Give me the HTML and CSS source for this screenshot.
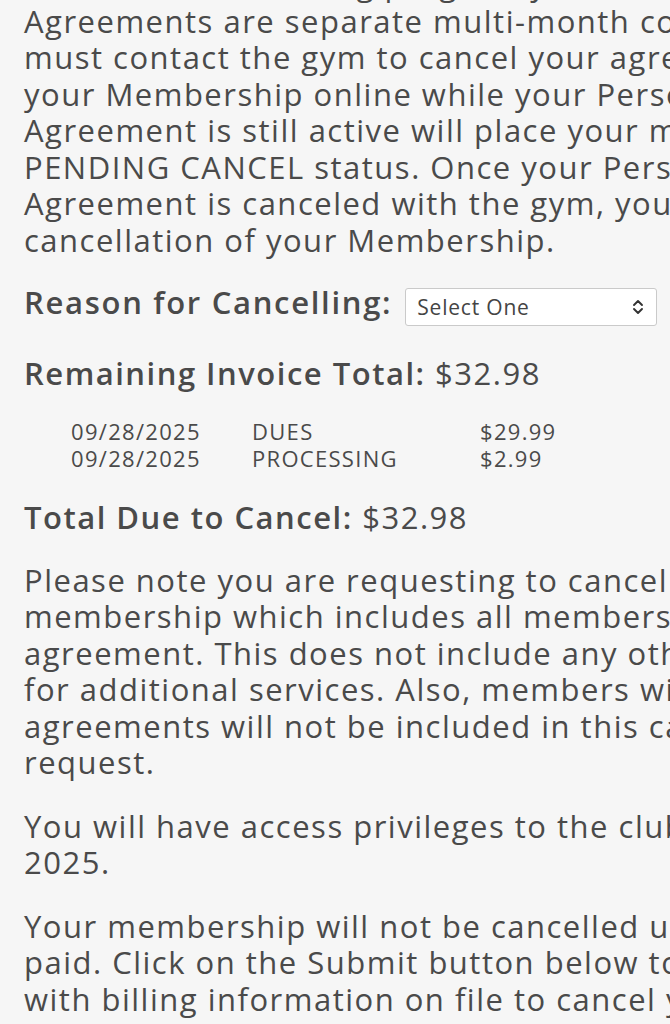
FILE: index.html
```html
<!DOCTYPE html>
<html lang="en">
<head>
<meta charset="utf-8">
<title>Cancel Membership</title>
<link rel="stylesheet" href="styles.css">
</head>
<body>
<main class="page">
  <p class="para intro">Note that the Training program your Personal<br>Agreements are separate multi-month contracts and you<br>must contact the gym to cancel your agreement. Cancelling<br>your Membership online while your Personal Training<br>Agreement is still active will place your membership in<br>PENDING CANCEL status. Once your Personal Training<br>Agreement is canceled with the gym, you can complete the<br>cancellation of your Membership.</p>

  <div class="field-row">
    <label class="label" for="reason">Reason for Cancelling:</label>
    <div class="select" id="reason">
      <span class="select-text">Select One</span>
      <svg class="chev" width="12" height="18" viewBox="0 0 12 18" aria-hidden="true"><path d="M2 7 L6 3 L10 7 M2 11 L6 15 L10 11" fill="none" stroke="#333" stroke-width="1.9" stroke-linecap="round" stroke-linejoin="round"/></svg>
    </div>
  </div>

  <h2 class="total"><span class="label">Remaining Invoice Total:</span> $32.98</h2>

  <table class="invoice">
    <tr><td class="c-date">09/28/2025</td><td class="c-desc">DUES</td><td class="c-amt">$29.99</td></tr>
    <tr><td class="c-date">09/28/2025</td><td class="c-desc">PROCESSING</td><td class="c-amt">$2.99</td></tr>
  </table>

  <h2 class="total total-due"><span class="label">Total Due to Cancel:</span> $32.98</h2>

  <p class="para">Please note you are requesting to cancel your<br>membership which includes all membership dues in the<br>agreement. This does not include any other agreements<br>for additional services. Also, members with additional<br>agreements will not be included in this cancellation<br>request.</p>

  <p class="para">You will have access privileges to the club until October 28,<br>2025.</p>

  <p class="para">Your membership will not be cancelled until the balance is<br>paid. Click on the Submit button below to pay the balance<br>with billing information on file to cancel your membership.</p>
</main>
</body>
</html>
```

FILE: styles.css
```css
html, body {
  margin: 0;
  padding: 0;
  background: #f6f6f6;
  overflow: hidden;
}
body {
  font-family: "Open Sans", "DejaVu Sans", sans-serif;
  color: #4a4a4a;
  width: 670px;
  height: 1024px;
}
.page {
  width: 1200px;
  padding: 0 24px;
  white-space: nowrap;
}
.para {
  font-size: 31px;
  line-height: 36.5px;
  letter-spacing: 1.5px;
  margin: 0 0 26.8px;
}
.intro {
  margin-top: -34px;
  margin-bottom: 26.4px;
}
.field-row {
  display: flex;
  align-items: flex-start;
  gap: 13px;
  margin-bottom: 29px;
}
.label {
  font-weight: 600;
}
.field-row .label {
  font-size: 31px;
  line-height: 36px;
  letter-spacing: 1.7px;
}
.select {
  width: 252px;
  height: 38px;
  box-sizing: border-box;
  margin-top: 4px;
  background: #fff;
  border: 1px solid #cacaca;
  border-radius: 3px;
  display: flex;
  align-items: center;
  justify-content: space-between;
  padding: 0 12px 0 11px;
}
.select-text {
  font-size: 21px;
  letter-spacing: 0.8px;
  color: #444;
}
.total {
  font-size: 31px;
  line-height: 36px;
  letter-spacing: 1.5px;
  font-weight: 400;
  margin: 0;
}
.invoice {
  border-collapse: collapse;
  margin: 27px 0 27px 47px;
  font-size: 22px;
  line-height: 27px;
  letter-spacing: 1.3px;
}
.invoice td {
  padding: 0;
}
.c-date { width: 181px; }
.c-desc { width: 228px; }
.total-due { margin-bottom: 26.6px; }
```
